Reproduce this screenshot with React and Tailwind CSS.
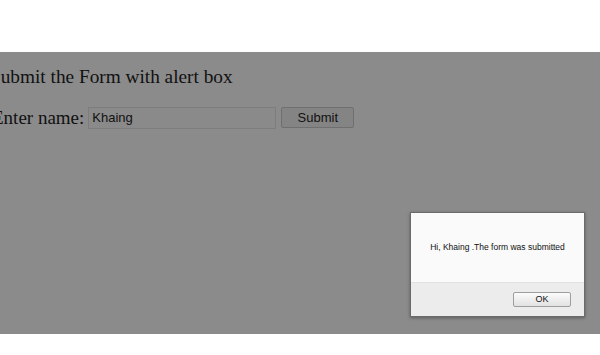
import React from "react";

const App = () => {
  return (
    <div className="w-[600px] h-[355px] bg-white overflow-hidden relative">
      <div className="h-[52px] bg-white" />
      <div className="h-[282px] bg-[#8b8b8b] pt-[13px] overflow-hidden">
        <h2
          className="-ml-[10px] text-[19.3px] leading-[23px] text-[#111]"
          style={{ fontFamily: '"Liberation Serif", serif' }}
        >
          Submit the Form with alert box
        </h2>
        <form className="-ml-[8px] mt-[18px] flex items-center" onSubmit={(e) => e.preventDefault()}>
          <label
            className="text-[19px] leading-[23px] text-[#111]"
            style={{ fontFamily: '"Liberation Serif", serif' }}
          >
            Enter name:
          </label>
          <input
            type="text"
            defaultValue="Khaing"
            className="ml-[4px] w-[188px] h-[22px] px-[3px] bg-[#8a8a8a] border border-[#7d7d7d] text-[13px] text-[#111] outline-none"
            style={{ fontFamily: '"Liberation Sans", sans-serif' }}
          />
          <button
            type="submit"
            className="ml-[5px] w-[73px] h-[21px] bg-[#848484] border border-[#6f6f6f] rounded-[2px] text-[13px] text-[#111]"
            style={{ fontFamily: '"Liberation Sans", sans-serif' }}
          >
            Submit
          </button>
        </form>
      </div>

      <div
        className="absolute left-[410px] top-[212px] w-[175px] h-[105px] bg-[#fafafa] border border-[#6a6a6a] shadow-[0_1px_3px_rgba(0,0,0,0.35)] flex flex-col"
        style={{ fontFamily: '"Liberation Sans", sans-serif' }}
      >
        <div className="flex-1 flex items-center justify-center text-[8.5px] text-[#111]">
          Hi, Khaing .The form was submitted
        </div>
        <div className="h-[34px] bg-[#ececec] border-t border-[#e2e2e2] flex items-center justify-end pr-[13px]">
          <button className="w-[58px] h-[15px] bg-gradient-to-b from-[#fbfbfb] to-[#e2e2e2] border border-[#9e9e9e] rounded-[2px] text-[9px] leading-[13px] text-[#111]">
            OK
          </button>
        </div>
      </div>
    </div>
  );
};

export default App;
